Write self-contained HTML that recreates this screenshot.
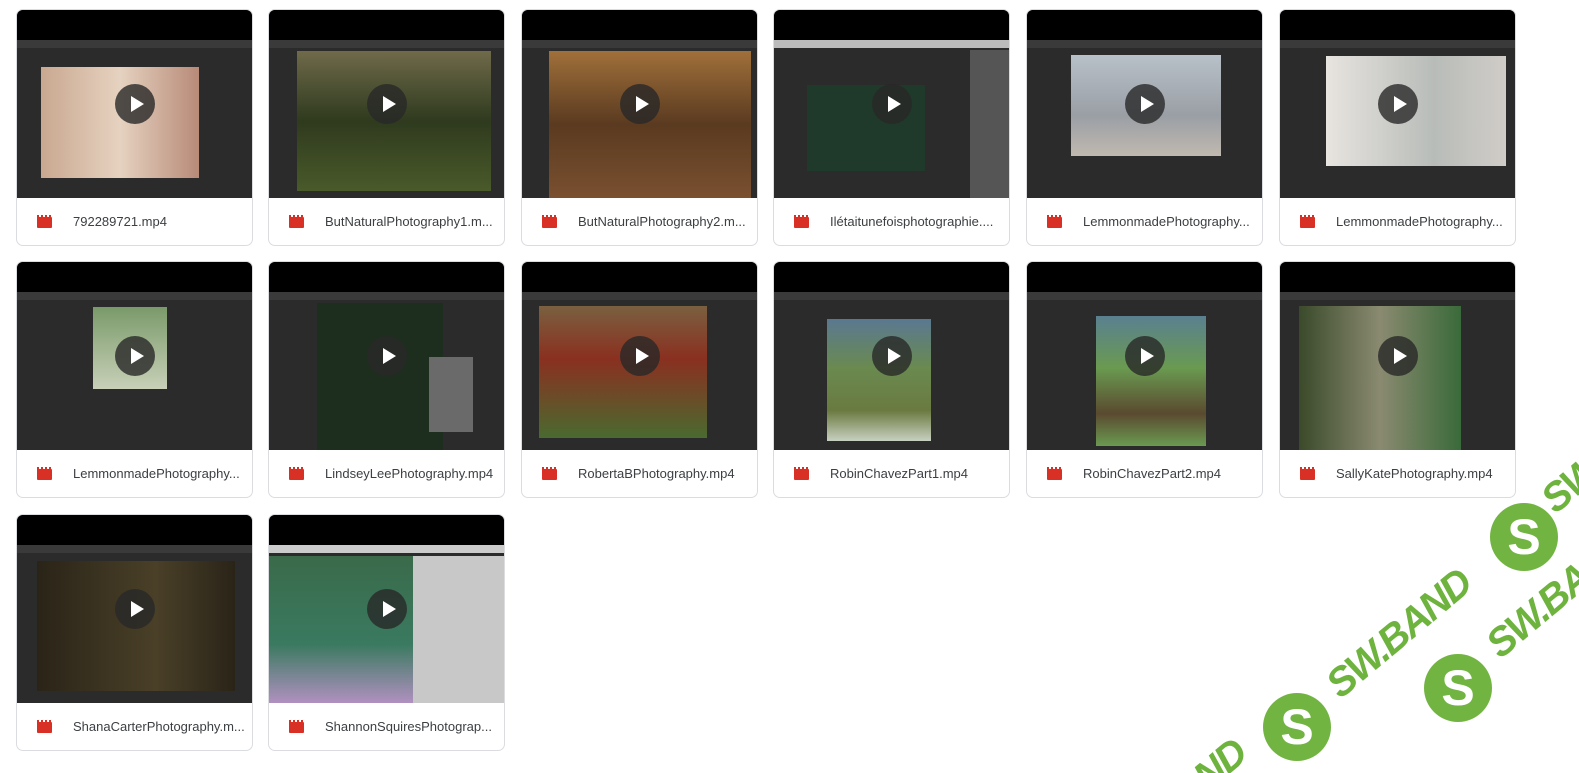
<!DOCTYPE html>
<html style="overflow:hidden"><head><meta charset="utf-8"><style>
html,body{margin:0;width:1579px;height:773px;overflow:hidden}
body{background:#fff;position:relative;font-family:"Liberation Sans",Roboto,sans-serif}
.card{position:absolute;width:237px;height:237px;border:1px solid #dadce0;border-radius:7px;box-sizing:border-box;overflow:hidden;background:#fff}
.th{position:absolute;left:0;top:0;width:100%;height:188px;background:#2b2b2b}
.th .bk{position:absolute;left:0;top:0;width:100%;height:30px;background:#000}
.th .bar{position:absolute;left:0;top:30px;width:100%;height:8px;background:#3a3a3a}
.im{position:absolute}
.play{position:absolute;left:98px;top:74px;width:40px;height:40px;border-radius:50%;background:rgba(40,40,40,.8)}
.play:after{content:"";position:absolute;left:16px;top:12px;border-left:13px solid #fff;border-top:8px solid transparent;border-bottom:8px solid transparent}
.lab{position:absolute;top:188px;left:0;width:100%;height:48px;line-height:48px;font-size:13px;color:#3c4043}
.ic{position:absolute;left:20px;top:19px;width:15px;height:11px;background:#d93025;border-radius:1px}
.ic:before{content:"";position:absolute;left:0;top:-2px;width:15px;height:3px;background:repeating-linear-gradient(90deg,#d93025 0 2px,transparent 2px 4px)}
.lab span{position:absolute;left:56px;white-space:nowrap}
.clip{position:absolute;left:0;top:0;width:1579px;height:773px;overflow:hidden;pointer-events:none}
.wm{position:absolute;font-family:"Liberation Sans",sans-serif;font-weight:bold;font-style:italic;color:#6fb33f;font-size:40px;line-height:40px;transform:rotate(-40deg);transform-origin:left bottom;white-space:nowrap;letter-spacing:-2px}
.c{position:absolute;width:68px;height:68px;border-radius:50%;background:#72b442;color:#fff;font:bold 50px/68px "Liberation Sans",sans-serif;text-align:center}
</style></head><body>

<div class="card" style="left:16px;top:9px"><div class="th"><div class="bk"></div><div class="bar"></div><div class="im" style="left:24px;top:57px;width:158px;height:111px;background:linear-gradient(90deg,#c9a890,#e6d2c0 50%,#b88a78)"></div><div class="play"></div></div><div class="lab"><i class="ic"></i><span>792289721.mp4</span></div></div>
<div class="card" style="left:268px;top:9px"><div class="th"><div class="bk"></div><div class="bar"></div><div class="im" style="left:28px;top:41px;width:194px;height:140px;background:linear-gradient(180deg,#6f6a4a,#2f3a1e 50%,#4a5a2a);"></div><div class="play"></div></div><div class="lab"><i class="ic"></i><span>ButNaturalPhotography1.m...</span></div></div>
<div class="card" style="left:521px;top:9px"><div class="th"><div class="bk"></div><div class="bar"></div><div class="im" style="left:27px;top:41px;width:202px;height:147px;background:linear-gradient(180deg,#a0703a,#5a3a20 50%,#7a5030)"></div><div class="play"></div></div><div class="lab"><i class="ic"></i><span>ButNaturalPhotography2.m...</span></div></div>
<div class="card" style="left:773px;top:9px"><div class="th"><div class="bk"></div><div class="bar" style="background:#bbb"></div><div class="im" style="left:33px;top:75px;width:118px;height:86px;background:#1f3a2a"></div><div class="im" style="left:196px;top:40px;width:41px;height:148px;background:#555"></div><div class="play"></div></div><div class="lab"><i class="ic"></i><span>Ilétaitunefoisphotographie....</span></div></div>
<div class="card" style="left:1026px;top:9px"><div class="th"><div class="bk"></div><div class="bar"></div><div class="im" style="left:44px;top:45px;width:150px;height:101px;background:linear-gradient(180deg,#b8c0c8,#9a9fa5 60%,#c0b8b0)"></div><div class="play"></div></div><div class="lab"><i class="ic"></i><span>LemmonmadePhotography...</span></div></div>
<div class="card" style="left:1279px;top:9px"><div class="th"><div class="bk"></div><div class="bar"></div><div class="im" style="left:46px;top:46px;width:180px;height:110px;background:linear-gradient(90deg,#e8e4e0,#b8bcb8 60%,#d0ccc8)"></div><div class="play"></div></div><div class="lab"><i class="ic"></i><span>LemmonmadePhotography...</span></div></div>

<div class="card" style="left:16px;top:261px"><div class="th"><div class="bk"></div><div class="bar"></div><div class="im" style="left:76px;top:45px;width:74px;height:82px;background:linear-gradient(180deg,#7a9a6a,#c8d0b8)"></div><div class="play"></div></div><div class="lab"><i class="ic"></i><span>LemmonmadePhotography...</span></div></div>
<div class="card" style="left:268px;top:261px"><div class="th"><div class="bk"></div><div class="bar"></div><div class="im" style="left:48px;top:41px;width:126px;height:147px;background:#1e2e1e"></div><div class="im" style="left:160px;top:95px;width:44px;height:75px;background:#6a6a6a"></div><div class="play"></div></div><div class="lab"><i class="ic"></i><span>LindseyLeePhotography.mp4</span></div></div>
<div class="card" style="left:521px;top:261px"><div class="th"><div class="bk"></div><div class="bar"></div><div class="im" style="left:17px;top:44px;width:168px;height:132px;background:linear-gradient(180deg,#7a6040,#8a3020 40%,#4a6a30)"></div><div class="play"></div></div><div class="lab"><i class="ic"></i><span>RobertaBPhotography.mp4</span></div></div>
<div class="card" style="left:773px;top:261px"><div class="th"><div class="bk"></div><div class="bar"></div><div class="im" style="left:53px;top:57px;width:104px;height:122px;background:linear-gradient(180deg,#5a7890,#6a8a50 40%,#6a7a40 75%,#c8d0c0)"></div><div class="play"></div></div><div class="lab"><i class="ic"></i><span>RobinChavezPart1.mp4</span></div></div>
<div class="card" style="left:1026px;top:261px"><div class="th"><div class="bk"></div><div class="bar"></div><div class="im" style="left:69px;top:54px;width:110px;height:130px;background:linear-gradient(180deg,#5a8090,#6a9a50 40%,#5a4a30 75%,#6a9a50)"></div><div class="play"></div></div><div class="lab"><i class="ic"></i><span>RobinChavezPart2.mp4</span></div></div>
<div class="card" style="left:1279px;top:261px"><div class="th"><div class="bk"></div><div class="bar"></div><div class="im" style="left:19px;top:44px;width:162px;height:144px;background:linear-gradient(90deg,#3a4a2a,#8a8a70 50%,#3a6a3a)"></div><div class="play"></div></div><div class="lab"><i class="ic"></i><span>SallyKatePhotography.mp4</span></div></div>

<div class="card" style="left:16px;top:514px"><div class="th"><div class="bk"></div><div class="bar"></div><div class="im" style="left:20px;top:46px;width:198px;height:130px;background:linear-gradient(90deg,#2a2418,#4a4028 60%,#2a2418)"></div><div class="play"></div></div><div class="lab"><i class="ic"></i><span>ShanaCarterPhotography.m...</span></div></div>
<div class="card" style="left:268px;top:514px"><div class="th"><div class="bk"></div><div class="bar" style="background:#ccc"></div><div class="im" style="left:0;top:41px;width:144px;height:147px;background:linear-gradient(180deg,#3a6a4a,#3a7a60 60%,#b090c0)"></div><div class="im" style="left:144px;top:41px;width:93px;height:147px;background:#c8c8c8"></div><div class="play"></div></div><div class="lab"><i class="ic"></i><span>ShannonSquiresPhotograp...</span></div></div>

<div class="clip">
<div class="c" style="left:1490px;top:503px">S</div>
<div class="c" style="left:1424px;top:654px">S</div>
<div class="c" style="left:1263px;top:693px">S</div>
<div class="wm" style="left:1345px;top:665px">SW.BAND</div>
<div class="wm" style="left:1505px;top:625px">SW.BAND</div>
<div class="wm" style="left:1120px;top:835px">SW.BAND</div>
<div class="wm" style="left:1560px;top:480px">SW</div>
</div>
</body></html>
